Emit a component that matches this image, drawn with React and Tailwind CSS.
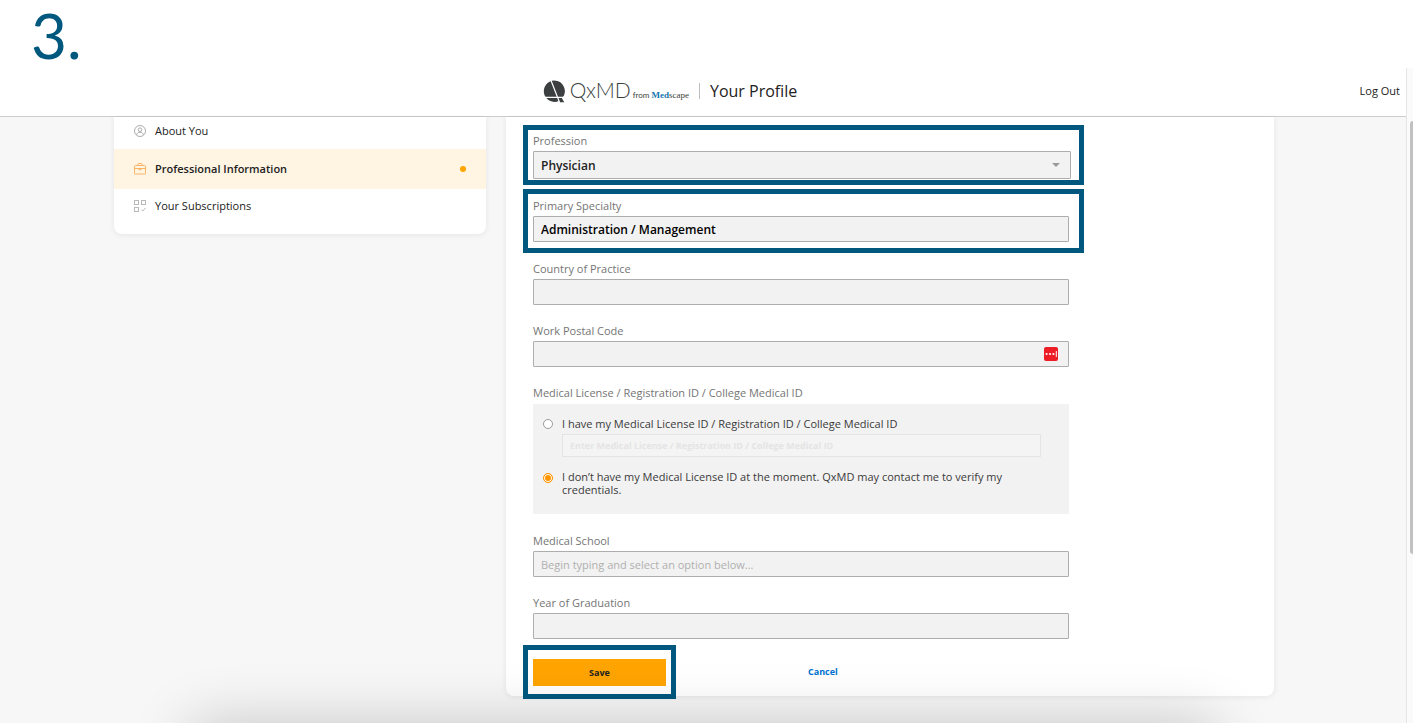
import React, { useState } from 'react';

const navItems = [
  { label: 'About You', icon: UserIcon, row: 'h-8 pb-1' },
  { label: 'Professional Information', icon: BriefcaseIcon, row: 'h-10', active: true },
  { label: 'Your Subscriptions', icon: SubscriptionsIcon, row: 'h-[34px]' },
];

function UserIcon() {
  return (
    <svg width="12" height="12" viewBox="0 0 12 12" fill="none" stroke="#a3a3a3" strokeWidth="0.9">
      <circle cx="6" cy="6" r="5.5" />
      <circle cx="6" cy="4.7" r="1.8" />
      <path d="M2.6 9.8C3 8 4.3 7.3 6 7.3s3 .7 3.4 2.5" />
    </svg>
  );
}

function BriefcaseIcon() {
  return (
    <svg width="12" height="12" viewBox="0 0 12 12" fill="none" stroke="#fdb366" strokeWidth="1">
      <rect x="0.5" y="2.5" width="11" height="8.5" rx="0.8" />
      <path d="M4 2.5V1.2q0-.7.7-.7h2.6q.7 0 .7.7v1.3M.5 5.5h11M4.8 5.8v.9h2.4v-.9" />
    </svg>
  );
}

function SubscriptionsIcon() {
  return (
    <svg width="12" height="12" viewBox="0 0 12 12" fill="none" stroke="#b8b8b8" strokeWidth="1">
      <rect x="0.5" y="0.5" width="4" height="4" />
      <rect x="7.5" y="0.5" width="4" height="4" />
      <rect x="0.5" y="7.5" width="4" height="4" />
      <path d="M7.3 9.7l1.4 1.4 2.8-3.2" />
    </svg>
  );
}

function Logo() {
  return (
    <div className="flex items-center text-[#3c3f40]">
      <svg width="23" height="23" viewBox="0 0 23 23" className="mr-1">
        <path d="M11 .5a10.7 10.7 0 0 1 8 17.9l2.3 3.8h-4.8l-.7-1.2A10.7 10.7 0 1 1 11 .5z" fill="#3c3f40" />
        <path d="M8 .5l8.6 22M1 17.3h21.5" stroke="#fff" strokeWidth="1.2" fill="none" />
      </svg>
      <div className="flex items-baseline pb-0.5">
        <span className="font-[Lato] text-[21px] leading-6 font-light">QxMD</span>
        <span className="ml-0.5 font-[Lato] text-[8px]">from</span>
        <span className="ml-0.5 font-['Liberation_Serif'] text-[9px]">
          <b className="text-[#1477b0]">Med</b>scape
        </span>
      </div>
    </div>
  );
}

const Field = ({ id, label, children, ...props }) => (
  <div className="flex flex-col gap-0.5">
    <label htmlFor={id} className="text-[11px] leading-4 text-[#757575]">{label}</label>
    <div className="relative flex">
      <input
        id={id}
        type="text"
        className="h-[26px] min-w-0 flex-1 rounded-[1px] border border-[#adadad] bg-[#f2f2f2] px-[7px] text-[12px] font-semibold text-black placeholder:text-[11px] placeholder:font-normal placeholder:text-[#b0b0b0]"
        {...props}
      />
      {children}
    </div>
  </div>
);

const Radio = ({ id, checked, onChange }) => (
  <input
    id={id}
    type="radio"
    name="license"
    checked={checked}
    onChange={onChange}
    className="mt-[3px] size-[10px] shrink-0 appearance-none rounded-full border border-[#9a9a9a] bg-white checked:border-[#ff9500] checked:bg-[#ff9500] checked:shadow-[inset_0_0_0_1px_#fff]"
  />
);

const App = () => {
  const [hasLicense, setHasLicense] = useState(false);

  return (
    <div className="flex min-h-screen flex-col bg-white font-['Open_Sans',sans-serif] text-[#222]">
      <h1 className="h-[68px] pl-[31px] font-[Lato] text-[62px] leading-[70px] text-[#00587f]">3.</h1>

      <div className="flex flex-1">
        <div className="relative flex min-w-0 flex-1 flex-col overflow-hidden bg-[#f7f7f7]">
          <header className="flex h-[49px] items-center border-b border-[#cccccc] bg-white pb-0.5">
            <div className="flex-1" />
            <div className="mr-[60px] flex items-center">
              <Logo />
              <span className="ml-2.5 h-4 w-px bg-[#bdbdbd]" />
              <h2 className="ml-2.5 text-[16px] leading-6">Your Profile</h2>
            </div>
            <div className="flex flex-1 justify-end pr-1.5">
              <a href="#logout" className="text-[11px] leading-4">Log Out</a>
            </div>
          </header>

          <div className="flex-1 pr-[18px]">
            <div className="mx-auto flex max-w-[1160px] items-start gap-5">
              <nav className="flex w-[372px] shrink-0 flex-col rounded-b-lg bg-white pb-[11px] shadow-[0_1px_6px_rgba(0,0,0,0.08)]">
                {navItems.map(({ label, icon: Icon, row, active }) => (
                  <a
                    key={label}
                    href="#profile"
                    className={`flex items-center px-5 text-[11px] leading-4 ${row} ${active ? 'bg-[#fff5e2] font-semibold' : ''}`}
                  >
                    <Icon />
                    <span className="ml-[9px] flex-1">{label}</span>
                    {active && <span className="size-1.5 rounded-full bg-[#ffa400]" />}
                  </a>
                ))}
              </nav>

              <main className="min-w-0 flex-1 rounded-b-lg bg-white px-[17px] pt-2 shadow-[0_1px_6px_rgba(0,0,0,0.08)]">
                <form className="flex max-w-[561px] flex-col" onSubmit={(e) => e.preventDefault()}>
                  <div className="border-5 border-[#00587f] pt-[3px] pr-2 pb-px pl-[5px]">
                    <div className="flex flex-col gap-0.5">
                      <label htmlFor="profession" className="text-[11px] leading-4 text-[#757575]">Profession</label>
                      <div className="relative flex">
                        <select
                          id="profession"
                          className="h-7 flex-1 appearance-none rounded-[1px] border border-[#adadad] bg-[#f2f2f2] px-[7px] pt-0.5 text-[12px] font-semibold text-[#222]"
                        >
                          <option>Physician</option>
                        </select>
                        <svg className="pointer-events-none absolute top-3 right-[11px]" width="8" height="4" viewBox="0 0 8 4">
                          <path d="M0 0h8L4 4z" fill="#999" />
                        </svg>
                      </div>
                    </div>
                  </div>

                  <div className="mt-1 border-5 border-[#00587f] pt-1 pr-2.5 pb-1.5 pl-[5px]">
                    <Field id="specialty" label="Primary Specialty" defaultValue="Administration / Management" />
                  </div>

                  <div className="flex flex-col gap-[18px] pt-2 pr-[15px] pl-2.5">
                    <Field id="country" label="Country of Practice" />
                    <Field id="postal" label="Work Postal Code">
                      <svg className="absolute top-[6px] right-[11px]" width="14" height="14" viewBox="0 0 14 14">
                        <rect width="14" height="14" rx="2" fill="#ee1c25" />
                        <g fill="#fff">
                          <circle cx="2.6" cy="7" r="1.1" />
                          <circle cx="6" cy="7" r="1.1" />
                          <circle cx="9.4" cy="7" r="1.1" />
                          <rect x="11.8" y="4" width="1" height="6" />
                        </g>
                      </svg>
                    </Field>

                    <fieldset className="pb-px">
                      <legend className="text-[11px] leading-4 text-[#757575]">
                        Medical License / Registration ID / College Medical ID
                      </legend>
                      <div className="mt-[3px] bg-[#f2f2f2] px-2.5 pt-3 pb-[18px] text-[11px] text-[#3a3a3a]">
                        <div className="flex gap-[9px]">
                          <Radio id="has-license" checked={hasLicense} onChange={() => setHasLicense(true)} />
                          <label htmlFor="has-license" className="leading-4">
                            I have my Medical License ID / Registration ID / College Medical ID
                          </label>
                        </div>
                        <input
                          type="text"
                          aria-label="License number"
                          disabled={!hasLicense}
                          placeholder="Enter Medical License / Registration ID / College Medical ID"
                          className="mt-0.5 mr-[18px] ml-[19px] block h-[23px] w-[calc(100%-37px)] border border-[#e4e4e4] bg-[#f4f4f4] px-[7px] text-[9px] font-bold placeholder:text-[#e4e4e4]"
                        />
                        <div className="mt-[13px] flex gap-[9px]">
                          <Radio id="no-license" checked={!hasLicense} onChange={() => setHasLicense(false)} />
                          <label htmlFor="no-license" className="max-w-[450px] leading-[13px]">
                            I don’t have my Medical License ID at the moment. QxMD may contact me to verify my credentials.
                          </label>
                        </div>
                      </div>
                    </fieldset>

                    <Field id="school" label="Medical School" placeholder="Begin typing and select an option below..." />
                    <Field id="graduation" label="Year of Graduation" />
                  </div>

                  <div className="mt-1.5 -mb-[3px] flex items-center">
                    <div className="border-5 border-[#00587f] px-[5px] pt-[9px] pb-2">
                      <button type="submit" className="block h-[27px] w-[133px] bg-[#ffa400] text-[9px] font-bold">
                        Save
                      </button>
                    </div>
                    <button type="button" className="ml-[132px] text-[9px] font-bold text-[#0073cf]">Cancel</button>
                  </div>
                </form>
              </main>
            </div>
          </div>

          <div className="absolute top-full right-[190px] left-[190px] h-24 rounded-lg shadow-[0_0_60px_rgba(0,0,0,0.2)]" />
        </div>

        <div className="w-[7px] border-l border-[#e6e6e6] bg-[#fafafa] pt-[53px] pl-[3px]">
          <div className="h-[433px] rounded-l-full bg-[#c1c1c1]" />
        </div>
      </div>
    </div>
  );
};

export default App;
